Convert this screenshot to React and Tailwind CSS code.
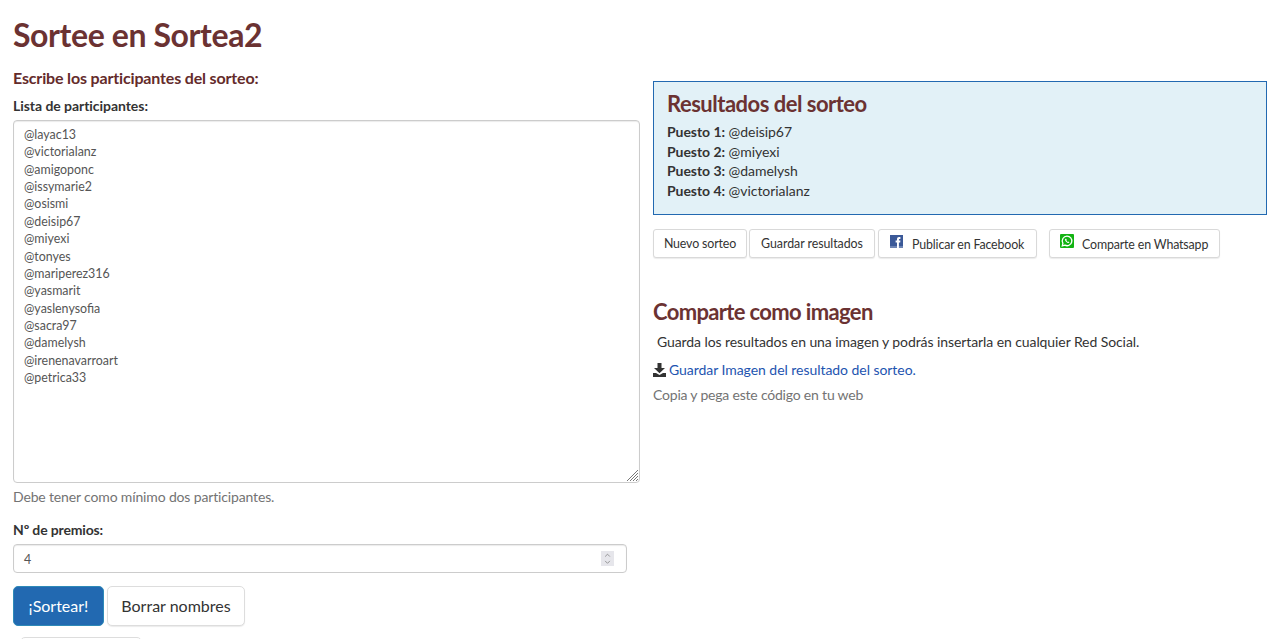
import { ChevronUp, ChevronDown } from "lucide-react";

const participantes = [
  "@layac13",
  "@victorialanz",
  "@amigoponc",
  "@issymarie2",
  "@osismi",
  "@deisip67",
  "@miyexi",
  "@tonyes",
  "@mariperez316",
  "@yasmarit",
  "@yaslenysofia",
  "@sacra97",
  "@damelysh",
  "@irenenavarroart",
  "@petrica33",
];

const resultados = ["@deisip67", "@miyexi", "@damelysh", "@victorialanz"];

const FacebookIcon = () => (
  <svg width="13" height="13" viewBox="0 0 13 13" className="shrink-0">
    <rect width="13" height="13" fill="#3b5998" />
    <rect y="11" width="13" height="2" fill="#6d84b4" />
    <path d="M7 13V7.4H5.6V5.4H7V4.2C7 2.8 7.8 2 9 2h1.4v2H9.5c-.4 0-.6.2-.6.6v.8h1.5l-.2 2H8.9V13z" fill="#fff" />
  </svg>
);

const WhatsappIcon = () => (
  <svg width="14" height="14" viewBox="0 0 14 14" className="shrink-0">
    <rect width="14" height="14" rx="1" fill="#12b312" />
    <path d="M7 2.1a4.8 4.8 0 0 0-4.1 7.2L2.3 11.8l2.6-.6A4.8 4.8 0 1 0 7 2.1z" fill="none" stroke="#fff" strokeWidth="1.3" />
    <path d="M5.4 4.8c-.5.5-.5 1.3.1 2.2.7 1 1.6 1.7 2.6 1.9.6.1 1.1-.2 1.3-.7l-1.1-.7-.5.4c-.6-.2-1.1-.7-1.4-1.3l.4-.5-.6-1.3z" fill="#fff" />
  </svg>
);

const DownloadIcon = () => (
  <svg width="13" height="14" viewBox="0 0 13 14" className="shrink-0">
    <path d="M4.5 0h4v5H12L6.5 10.2 1 5h3.5z" fill="#333" />
    <path d="M0 10h3l3.5 2L10 10h3v4H0z" fill="#333" />
  </svg>
);

const SmallButton = ({ children, className = "" }) => (
  <button className={`h-[29px] flex items-center whitespace-nowrap border border-[#d9d9d9] rounded-[3px] bg-white text-[12.4px] text-[#333] shadow-[0_1px_1px_rgba(0,0,0,0.08)] ${className}`}>
    {children}
  </button>
);

export default function App() {
  return (
    <div className="h-[639px] overflow-hidden bg-white px-[13px] font-['Lato',sans-serif] text-[#333]">
      <h1 className="pt-[14px] text-[32px] leading-[42px] font-bold tracking-[-0.4px] text-[#6b3232]">Sortee en Sortea2</h1>

      <div className="flex gap-[13px]">
        <div className="w-[627px] shrink-0">
          <h2 className="mt-[11px] text-[16px] leading-[22px] font-bold tracking-[-0.16px] text-[#642b2b]">Escribe los participantes del sorteo:</h2>
          <label className="block mt-[7px] text-[14px] leading-[20px] font-bold tracking-[-0.05px]">Lista de participantes:</label>
          <div className="relative mt-[4px] w-[627px] h-[363px]">
            <textarea
              readOnly
              defaultValue={participantes.join("\n")}
              className="block w-full h-full resize-none px-[10px] py-[5px] border border-[#ccc] rounded-[4px] text-[12.4px] leading-[17.36px] text-[#555] outline-none shadow-[inset_0_1px_1px_rgba(0,0,0,0.08)]"
            />
            <svg width="13" height="13" viewBox="0 0 13 13" className="absolute right-[1px] bottom-[1px]">
              <path d="M12 1 1 12M12 4 4 12M12 7 7 12M12 10 10 12" stroke="#777" strokeWidth="1" fill="none" />
            </svg>
          </div>
          <p className="mt-[4px] text-[14px] leading-[20px] tracking-[-0.15px] text-[#737373]">Debe tener como mínimo dos participantes.</p>

          <label className="block mt-[13px] text-[14px] leading-[20px] font-bold tracking-[-0.15px]">Nº de premios:</label>
          <div className="mt-[4px] w-[614px] h-[29px] flex items-center justify-between pl-[10px] pr-[12px] border border-[#ccc] rounded-[4px] text-[12.4px] text-[#555] shadow-[inset_0_1px_1px_rgba(0,0,0,0.08)]">
            <span className="pt-[4px]">4</span>
            <span className="w-[13px] h-[15px] flex flex-col items-center justify-center bg-[#e6e6eb] text-[#666]">
              <ChevronUp size={9} strokeWidth={1.75} className="-mb-[1px]" />
              <ChevronDown size={9} strokeWidth={1.75} className="-mt-[1px]" />
            </span>
          </div>

          <div className="mt-[13px] flex gap-[3px]">
            <button className="w-[91px] h-[40px] rounded-[5px] border border-[#2e8ab8] bg-[#2269b1] text-[16px] text-white">¡Sortear!</button>
            <button className="w-[138px] h-[40px] rounded-[5px] border border-[#ddd] bg-white text-[16px] text-[#333] shadow-[0_1px_1px_rgba(0,0,0,0.08)]">Borrar nombres</button>
          </div>
          <div className="mt-[11px] ml-[7px] w-[122px] h-[40px] rounded-[5px] border border-[#ddd] bg-white" />
        </div>

        <div className="w-[614px] shrink-0">
          <div className="mt-[25px] h-[134px] px-[13px] py-[8px] border border-[#2269b1] bg-[#e2f1f7]">
            <h3 className="text-[22px] leading-[28px] font-bold tracking-[-0.5px] text-[#6b3232]">Resultados del sorteo</h3>
            <ul className="mt-[4px]">
              {resultados.map((nombre, i) => (
                <li key={nombre} className="text-[14px] leading-[19.6px] tracking-[-0.05px]">
                  <b>Puesto {i + 1}:</b> {nombre}
                </li>
              ))}
            </ul>
          </div>

          <div className="mt-[14px] flex">
            <SmallButton className="w-[94px] justify-center pt-[2px] tracking-[-0.15px]">Nuevo sorteo</SmallButton>
            <SmallButton className="ml-[2px] w-[126px] justify-center pt-[2px] tracking-[-0.05px]">Guardar resultados</SmallButton>
            <SmallButton className="ml-[3px] w-[159px] pl-[11px] gap-[9px] items-start tracking-[-0.15px]">
              <span className="mt-[5px]"><FacebookIcon /></span>
              <span className="mt-[6px]">Publicar en Facebook</span>
            </SmallButton>
            <SmallButton className="ml-[12px] w-[171px] pl-[10px] gap-[8px] items-start tracking-[-0.15px]">
              <span className="mt-[4px]"><WhatsappIcon /></span>
              <span className="mt-[6px]">Comparte en Whatsapp</span>
            </SmallButton>
          </div>

          <h3 className="mt-[40px] text-[22px] leading-[28px] font-bold tracking-[-0.65px] text-[#6b3232]">Comparte como imagen</h3>
          <p className="mt-[6px] pl-[4px] text-[14px] leading-[20px] tracking-[-0.085px]">Guarda los resultados en una imagen y podrás insertarla en cualquier Red Social.</p>
          <div className="mt-[8px] flex items-center gap-[3px] h-[20px]">
            <DownloadIcon />
            <a className="text-[14px] leading-[20px] tracking-[-0.05px] text-[#1d54b0]">Guardar Imagen del resultado del sorteo.</a>
          </div>
          <p className="mt-[5px] text-[14px] leading-[20px] tracking-[-0.2px] text-[#737373]">Copia y pega este código en tu web</p>
        </div>
      </div>
    </div>
  );
}
